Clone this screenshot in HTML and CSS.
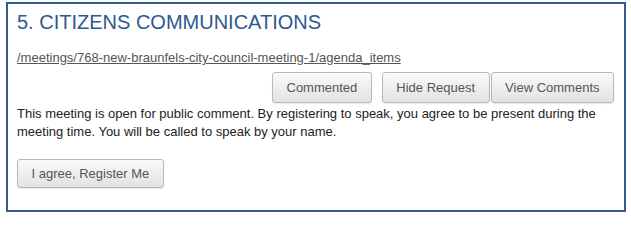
FILE: index.html
```html
<!DOCTYPE html>
<html>
<head>
<meta charset="utf-8">
<link rel="stylesheet" href="styles.css">
</head>
<body>
<div class="item">
  <h2 class="title">5. CITIZENS COMMUNICATIONS</h2>
  <a class="path" href="#">/meetings/768-new-braunfels-city-council-meeting-1/agenda_items</a>
  <div class="actions">
    <button class="btn">Commented</button>
    <div class="pair">
      <button class="btn">Hide Request</button>
      <button class="btn">View Comments</button>
    </div>
  </div>
  <p class="note">This meeting is open for public comment. By registering to speak, you agree to be present during the meeting time. You will be called to speak by your name.</p>
  <button class="btn btn-register">I agree, Register Me</button>
</div>
</body>
</html>
```
FILE: styles.css
```css
html, body {
  margin: 0;
  padding: 0;
  background: #fff;
}
body {
  font-family: "Liberation Sans", Arial, sans-serif;
  font-size: 13px;
  color: #222;
}
.item {
  margin: 2px 5px 0 6px;
  height: 206px;
  border: 2px solid #2f5d90;
  padding: 0 10px 0 9px;
  display: flex;
  flex-direction: column;
  align-items: flex-start;
}
.title {
  margin: 6px 0 0 0;
  font-size: 20px;
  font-weight: normal;
  line-height: 24px;
  color: #2c5a8e;
}
.path {
  margin-top: 16px;
  color: #555;
  line-height: 16px;
  text-decoration: underline;
}
.actions {
  align-self: stretch;
  display: flex;
  justify-content: flex-end;
  gap: 10px;
  margin-top: 6px;
}
.pair {
  display: flex;
}
.btn {
  font-family: "Liberation Sans", Arial, sans-serif;
  font-size: 13px;
  color: #555;
  height: 31px;
  padding: 0 13.5px;
  border: 1px solid #b8b8b8;
  border-radius: 3px;
  background: linear-gradient(#fafafa, #e2e2e2);
  box-shadow: 0 1px 1px rgba(0,0,0,0.08);
}
.pair .btn + .btn {
  margin-left: 1px;
}
.note {
  margin: 2px 0 0 0;
  line-height: 18px;
  color: #222;
}
.btn-register {
  margin-top: 18px;
  height: 29px;
}
```
